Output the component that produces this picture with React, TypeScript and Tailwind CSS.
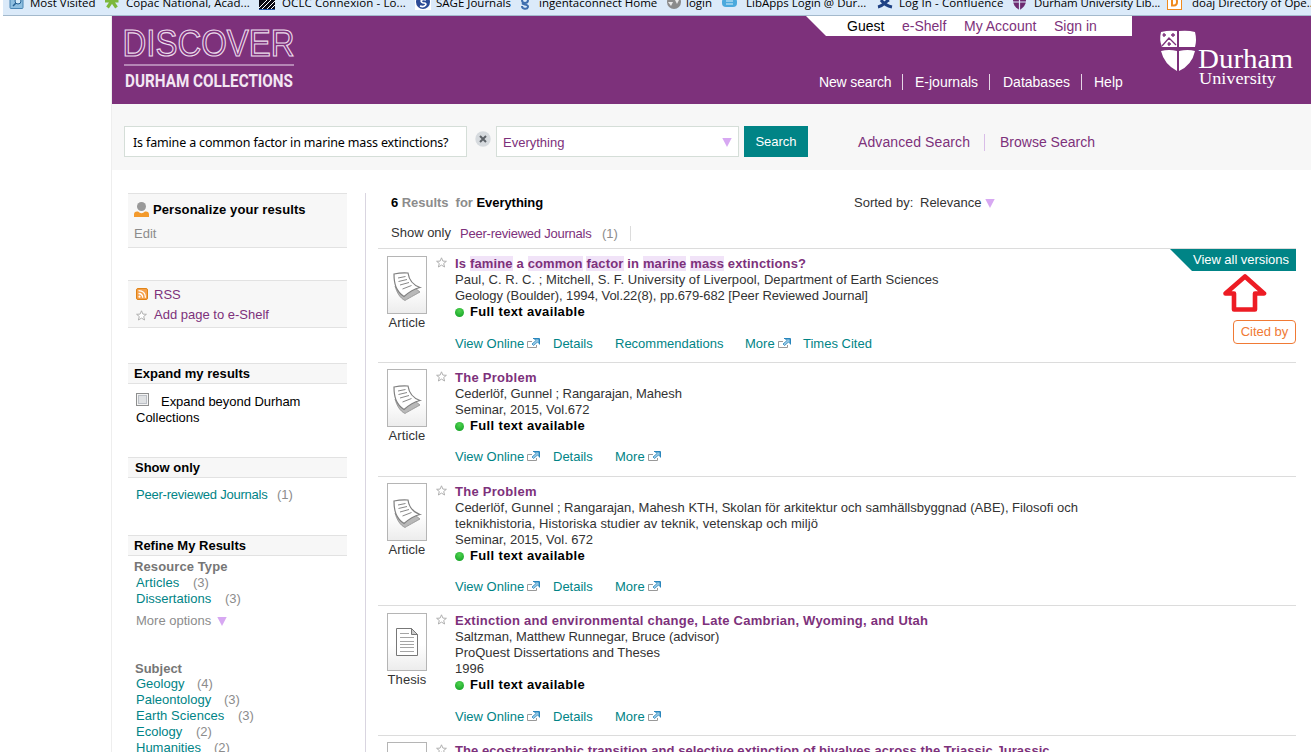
import React from "react";

const cx = (...parts: (string | undefined)[]) => parts.filter(Boolean).join(" ");

/* ---------- icons ---------- */

function Star() {
  return (
    <svg width="11" height="11" viewBox="0 0 11 11" className="block shrink-0">
      <path d="M5.5 .8 6.9 4.1 10.4 4.3 7.7 6.5 8.6 10 5.5 8.1 2.4 10 3.3 6.5 .6 4.3 4.1 4.1Z" fill="#fff" stroke="#b0b0b0" strokeWidth="1" />
    </svg>
  );
}

function External() {
  return (
    <svg width="13" height="11" viewBox="0 0 13 11" className="block shrink-0">
      <path d="M5 3.500H.5V9.500H9.500V7" fill="none" stroke="#999" />
      <path d="M6 .5H12.500V6.500" fill="none" stroke="#2a86bd" />
      <path d="M7.500 1H12V5.500L10.500 4 6.500 7.500 5 6 9 2.500Z" fill="#9ccbe6" stroke="#2a86bd" strokeWidth=".8" />
    </svg>
  );
}

function Triangle({ className }: { className?: string }) {
  return (
    <svg width="10" height="9" viewBox="0 0 10 9" className={cx("block shrink-0", className)}>
      <path d="M.3 0H9.700L5 9Z" fill="#d7a8f2" />
    </svg>
  );
}

function ArticleThumb() {
  return (
    <svg width="40" height="58" viewBox="0 0 40 58" className="block">
      <defs>
        <linearGradient id="thumb" x1="0" y1="0" x2="0" y2="1">
          <stop offset="0.550" stopColor="#fff" />
          <stop offset="1" stopColor="#ececec" />
        </linearGradient>
      </defs>
      <rect x=".5" y=".5" width="39" height="57" fill="url(#thumb)" stroke="#b5b5b5" />
      <path d="M8 30C10 37 13 42 18 44.500 22 42 26 40 33 36L28 32Z" fill="#b9b9b9" stroke="#8f8f8f" strokeWidth=".8" />
      <path d="M7 18C7 28 9 35 17 40.500 22 36 27 33 33 31.500 26 29 22 24 21 17Q14 16.500 7 18Z" fill="#fff" stroke="#808080" strokeWidth="1.200" />
      <path d="M11 22 18.500 20.500M11.500 25.500 20 23.500M13 29 22 26.500M15.500 33 24.500 29.500" stroke="#888" strokeWidth="1" />
    </svg>
  );
}

function ThesisThumb() {
  return (
    <svg width="40" height="58" viewBox="0 0 40 58" className="block">
      <rect x=".5" y=".5" width="39" height="57" fill="url(#thumb)" stroke="#b5b5b5" />
      <path d="M9.500 15.500H24.500L30.500 21.500V42.500H9.500Z" fill="#fff" stroke="#777" />
      <path d="M24.500 15.500V21.500H30.500Z" fill="#ccc" stroke="#777" />
      <path d="M13 20.500H22M13 24.500H27M13 28.500H27M13 31.500H27M13 34.500H27M13 38.500H27" stroke="#a5a5a5" />
    </svg>
  );
}

/* ---------- bookmarks bar ---------- */

const bookmarkIcons: React.ReactNode[] = [
  <g key="0"><rect x="1" y="-3" width="13" height="11.500" rx="1" fill="#8fbfe0" stroke="#4b86b4" /><path d="M4 6 7 3" stroke="#245f91" strokeWidth="1.500" /><circle cx="9" cy="1" r="3" fill="#d6ecfa" stroke="#245f91" /></g>,
  <path key="1" d="M8 1 3.500 7.500M8 1 12.500 7.500M1 1H14.500" stroke="#7cb83c" strokeWidth="3.200" />,
  <g key="2"><rect width="16" height="10" fill="#0a0a14" /><path d="M3 9 12 0M7 10 16 1M11 10 16 5M0 8 8 0" stroke="#fff" strokeWidth="1" /><path d="M0 9.500H16" stroke="#2456a8" /></g>,
  <g key="3"><rect width="16" height="10" fill="#fff" /><circle cx="8" cy="2" r="7" fill="#2c4b96" /><path d="M11 0C5-2 5 3 9 3S10 8 5 6" fill="none" stroke="#fff" strokeWidth="1.700" /></g>,
  <path key="4" d="M5 0C5 4 11 4 11 0M6 3C4 5 12 4 11 7S5 9 5 6" fill="none" stroke="#3f6fae" strokeWidth="2" />,
  <g key="5"><circle cx="8" cy="2" r="7" fill="#8b8b8b" /><path d="M2 2H7L5 6ZM9 0H13L11 4Z" fill="#e8e8e8" /></g>,
  <g key="6"><rect x="0" y="-2" width="15" height="9" rx="4" fill="#4aa9dd" /><path d="M4 1H11M4 4H11" stroke="#d9f0fb" /></g>,
  <path key="7" d="M1 7C6 6 8 2 12 0M4 0C7 4 10 6 15 7" stroke="#1e4184" strokeWidth="3" fill="none" />,
  <g key="8"><path d="M1 0H14C14 5 11 8 7.500 10 4 8 1 5 1 0Z" fill="#6c2a70" /><path d="M7.500 0V10M0 2H15" stroke="#dbeaf9" strokeWidth="1.200" /></g>,
  <g key="9"><rect x=".5" y="-5" width="14" height="14.500" fill="#fff" stroke="#f08a1d" /><path d="M5-2V5.500H7C11 5.500 11-2 7-2" fill="none" stroke="#f08a1d" strokeWidth="2" /></g>,
];

const bookmarks: [string, string, string][] = [
  ["Most Visited", "w-[95px]", "ml-[5px]"],
  ["Copac National, Acad...", "w-[155px]", "ml-[6px] tracking-[0.05px]"],
  ["OCLC Connexion - Lo...", "w-[156px]", "ml-[7px] tracking-[0.1px]"],
  ["SAGE Journals", "w-[102px]", "ml-[5px]"],
  ["ingentaconnect Home", "w-[149px]", "ml-[6px]"],
  ["login", "w-[56px]", "ml-[4px]"],
  ["LibApps Login @ Dur...", "w-[155px]", "ml-[8px]"],
  ["Log In - Confluence", "w-[135px]", "ml-[6px] tracking-[0.1px]"],
  ["Durham University Lib...", "w-[155px]", "ml-[6px] tracking-[-0.1px]"],
  ["doaj Directory of Ope...", "w-[160px]", "ml-[9px]"],
];

function BookmarksBar() {
  return (
    <div className="ml-[3px] flex h-[16px] overflow-hidden border-b border-[#a3b9cc] bg-[#dbeaf9] pl-[6px] font-['Open_Sans',sans-serif] text-[11.5px] text-black">
      {bookmarks.map(([label, width, gap], i) => (
        <div key={label} className={cx("flex shrink-0 whitespace-nowrap", width)}>
          <svg width="16" height="11" viewBox="0 0 16 11" className="shrink-0">{bookmarkIcons[i]}</svg>
          <span className={cx("-mt-[5px] leading-[16px]", gap)}>{label}</span>
        </div>
      ))}
    </div>
  );
}

/* ---------- header ---------- */

function Header() {
  return (
    <header className="flex h-[88px] bg-[#7d317b]">
      <svg width="190" height="88" viewBox="112 16 190 88" className="shrink-0">
        <text x="122.500" y="55.500" textLength="172" lengthAdjust="spacingAndGlyphs" fontFamily="Liberation Sans, sans-serif" fontSize="37" fill="#7d317b" stroke="#ecdcec" strokeWidth="1.200">DISCOVER</text>
        <path d="M124 65H294" stroke="#c9a3c8" strokeWidth="1.600" />
        <text x="125" y="87" textLength="168" lengthAdjust="spacingAndGlyphs" fontFamily="Roboto, sans-serif" fontWeight="700" fontSize="18.500" fill="#f3e6f3">DURHAM COLLECTIONS</text>
      </svg>
      <div className="ml-auto flex w-[326px] flex-col">
        <div className="flex h-[20px] bg-white pl-[41px] text-[14px] leading-[20px] text-[#7d317b] [clip-path:polygon(0_0,100%_0,100%_100%,20px_100%)]">
          <span className="w-[55px] text-black">Guest</span>
          <span className="w-[62px]">e-Shelf</span>
          <span className="w-[90px]">My Account</span>
          <span>Sign in</span>
        </div>
        <nav className="mt-[38px] flex h-[16px] whitespace-nowrap pl-[13px] text-[14px] leading-[16px] text-white">
          <span className="w-[83px] tracking-[-0.15px]">New search</span>
          <span className="w-[87px] border-l border-[#e5d5e5] pl-[12px]">E-journals</span>
          <span className="w-[92px] border-l border-[#e5d5e5] pl-[13px]">Databases</span>
          <span className="border-l border-[#e5d5e5] pl-[12px]">Help</span>
        </nav>
      </div>
      <svg width="179" height="88" viewBox="1132 16 179 88" className="shrink-0">
        <path d="M1161 32Q1169 30 1177 31V47H1162Q1159 40 1161 32ZM1179 31Q1188 30 1195 32 1197 40 1195 47H1179ZM1161 51Q1169 49 1177 51V71Q1164 64 1161 51ZM1179 51Q1188 49 1195 51 1192 65 1179 71Z" fill="#fff" />
        <path d="M1162 46 1169 38 1176 45M1164 33V37M1162.500 35H1166M1173 33V37M1171 35H1175M1169 42V46M1167.500 44H1171" fill="none" stroke="#7d317b" strokeWidth="1.300" />
        <text x="1198" y="68" textLength="95" lengthAdjust="spacingAndGlyphs" fontFamily="Liberation Serif, serif" fontSize="27" fill="#fff">Durham</text>
        <text x="1199" y="84" textLength="77" lengthAdjust="spacingAndGlyphs" fontFamily="Liberation Serif, serif" fontSize="17.500" fill="#fff">University</text>
      </svg>
    </header>
  );
}

function SearchBand() {
  return (
    <div className="flex h-[66px] bg-[#f7f7f7] pl-[12px] pt-[22px]">
      <div className="flex h-[31px] w-[343px] items-center whitespace-nowrap border border-[#d5ded8] bg-white pl-[8px] pt-[4px] font-['Noto_Sans',sans-serif] text-[12.5px] tracking-[-0.16px] text-black">
        Is famine a common factor in marine mass extinctions?
      </div>
      <svg width="16" height="16" viewBox="0 0 16 16" className="ml-[8px] mt-[5px] shrink-0">
        <circle cx="8" cy="8" r="7.700" fill="#d6dade" />
        <path d="M5 5 11 11M11 5 5 11" stroke="#5d6268" strokeWidth="2" />
      </svg>
      <div className="ml-[5px] flex h-[31px] w-[243px] items-center justify-between border border-[#d5ded8] bg-white pl-[6px] pr-[6px] pt-[2px] text-[13px] text-[#7d317b]">
        <span>Everything</span>
        <Triangle />
      </div>
      <button className="ml-[5px] h-[31px] w-[64px] bg-[#008486] text-[13px] text-white">Search</button>
      <div className="ml-[50px] flex h-[16px] whitespace-nowrap pt-[8px] text-[14px] text-[#7d317b]">
        <span className="h-[17px] w-[126px] leading-[16px] tracking-[0.1px]">Advanced Search</span>
        <span className="h-[17px] border-l border-[#d9bde8] pl-[15px] leading-[16px]">Browse Search</span>
      </div>
    </div>
  );
}

/* ---------- sidebar ---------- */

function Bar({ children, className }: { children: React.ReactNode; className?: string }) {
  return (
    <h2 className={cx("h-[21px] border-y border-[#e2e2e2] bg-[#f7f7f7] text-[13px] font-bold leading-[19px] text-black", className)}>
      {children}
    </h2>
  );
}

function Facet({ name, count, width }: { name: string; count: number; width: string }) {
  return (
    <div className="flex pl-[8px] text-[13px] leading-[16px] text-[#008486]">
      <span className={cx("shrink-0 whitespace-nowrap", width)}>{name}</span>
      <span className="text-[#8c8c8c]">({count})</span>
    </div>
  );
}

function Sidebar() {
  return (
    <aside className="mt-[23px] w-[219px] shrink-0 text-[13px] leading-[16px]">
      <section className="h-[55px] border-y border-[#e2e2e2] bg-[#f7f7f7] pl-[6px] pt-[8px]">
        <div className="flex items-center">
          <svg width="15" height="16" viewBox="0 0 15 16" className="shrink-0">
            <path d="M0 15V12.500Q0 9 4 9.500 7.500 13 11 9.500 15 9 15 12.500V15Z" fill="#f39a2c" />
            <circle cx="7.500" cy="4.500" r="4.500" fill="#999" />
          </svg>
          <b className="ml-[4px] tracking-[0.1px] text-black">Personalize your results</b>
        </div>
        <div className="mt-[8px] text-[#8c8c8c]">Edit</div>
      </section>
      <section className="mt-[32px] h-[48px] border-y border-[#e2e2e2] bg-[#f7f7f7] pl-[8px] pt-[6px] text-[#7d317b]">
        <div className="flex items-center">
          <svg width="12" height="12" viewBox="0 0 12 12" className="-mt-[2px] shrink-0">
            <rect x=".5" y=".5" width="11" height="11" rx="1.500" fill="#f5a04a" stroke="#e08417" />
            <circle cx="3.500" cy="8.700" r="1.100" fill="#fff" />
            <path d="M2.500 5.500Q6.500 5.500 6.700 9.700M2.500 2.700Q9.300 2.700 9.500 9.700" fill="none" stroke="#fff" strokeWidth="1.300" />
          </svg>
          <span className="ml-[6px]">RSS</span>
        </div>
        <div className="mt-[4px] flex items-center">
          <Star />
          <span className="ml-[7px]">Add page to e-Shelf</span>
        </div>
      </section>
      <Bar className="mt-[35px] pl-[6px] tracking-[0.03px]">Expand my results</Bar>
      <div className="mt-[9px] pl-[8px] text-black">
        <div className="flex">
          <span className="h-[13px] w-[13px] border border-[#8e8f8f] bg-[#dfe1e3] shadow-[inset_0_0_0_1px_#f4f4f4,inset_0_0_0_2px_#bcc0c6]" />
          <span className="ml-[12px] mt-px tracking-[-0.04px]">Expand beyond Durham</span>
        </div>
        <div>Collections</div>
      </div>
      <Bar className="mt-[31px] pl-[7px]">Show only</Bar>
      <div className="mt-[9px]">
        <Facet name="Peer-reviewed Journals" count={1} width="w-[141px] tracking-[-0.23px]" />
      </div>
      <Bar className="mt-[32px] pl-[6px]">Refine My Results</Bar>
      <div className="mt-[3px] pl-[6px] font-bold tracking-[0.1px] text-[#767676]">Resource Type</div>
      <Facet name="Articles" count={3} width="w-[57px] tracking-[0.1px]" />
      <Facet name="Dissertations" count={3} width="w-[89px]" />
      <div className="mt-[6px] flex items-center pl-[8px] text-[#8c8c8c]">
        <span className="w-[81px]">More options</span>
        <Triangle />
      </div>
      <div className="mt-[32px] pl-[7px] font-bold text-[#767676]">Subject</div>
      <div className="-mt-px">
        <Facet name="Geology" count={4} width="w-[61px]" />
        <Facet name="Paleontology" count={3} width="w-[88px]" />
        <Facet name="Earth Sciences" count={3} width="w-[102px] tracking-[0.07px]" />
        <Facet name="Ecology" count={2} width="w-[60px]" />
        <Facet name="Humanities" count={2} width="w-[78px]" />
      </div>
    </aside>
  );
}

/* ---------- results ---------- */

type Action = { label: string; width: string; external?: boolean };
type Line = { text: string; tracking?: string };

const view: Action = { label: "View Online", width: "w-[98px]", external: true };
const details: Action = { label: "Details", width: "w-[62px]" };
const more: Action = { label: "More", width: "w-[58px]", external: true };

type ResultProps = {
  height: string;
  thumbTop: string;
  kind: "Article" | "Thesis";
  title: React.ReactNode;
  titleTracking: string;
  lines: Line[];
  actions: Action[];
  actionsTop: string;
  children?: React.ReactNode;
};

function Result({ height, thumbTop, kind, title, titleTracking, lines, actions, actionsTop, children }: ResultProps) {
  return (
    <article className={cx("flex shrink-0 border-t border-[#dcdcdc] text-[13px] leading-[16px] text-[#333]", height)}>
      <div className={cx("ml-[9px] w-[40px] shrink-0 text-center", thumbTop)}>
        {kind === "Article" ? <ArticleThumb /> : <ThesisThumb />}
        <div className="mt-px tracking-[0.1px]">{kind}</div>
      </div>
      <div className="ml-[9px] mt-[8px] w-[19px] shrink-0"><Star /></div>
      <div className="mt-[7px] whitespace-nowrap">
        <h3 className={cx("font-bold text-[#7d317b]", titleTracking)}>{title}</h3>
        {lines.map((line) => <div key={line.text} className={line.tracking}>{line.text}</div>)}
        <div className="flex items-center font-bold tracking-[0.35px] text-black">
          <span className="mr-[6px] h-[9px] w-[9px] rounded-full bg-[radial-gradient(circle_at_50%_30%,#4fd34f,#0f9c22)]" />
          Full text available
        </div>
        <div className={cx("flex text-[#008486]", actionsTop)}>
          {actions.map((a) => (
            <span key={a.label} className={cx("flex shrink-0 items-start", a.width)}>
              {a.label}
              {a.external && <span className="ml-[3px] mt-[2px]"><External /></span>}
            </span>
          ))}
        </div>
      </div>
      {children}
    </article>
  );
}

const Hit = ({ children }: { children: string }) => <span className="bg-[#f1e3f8]">{children}</span>;

function Results() {
  return (
    <main className="ml-[12px] mt-[24px] flex w-[918px] shrink-0 flex-col text-[13px] leading-[16px]">
      <div className="flex h-[18px] shrink-0 items-center pl-[13px]">
        <b className="w-[463px] tracking-[-0.04px] text-[#8c8c8c]">
          <span className="text-black">6</span> Results&nbsp; for <span className="text-black">Everything</span>
        </b>
        <span className="w-[66px] whitespace-nowrap text-[#333]">Sorted by:</span>
        <span className="w-[65px] text-[#333]">Relevance</span>
        <Triangle />
      </div>
      <div className="mt-[14px] flex h-[16px] shrink-0 pl-[13px] text-[#333]">
        <span className="-mt-px w-[69px]">Show only</span>
        <span className="w-[142px] tracking-[-0.23px] text-[#7d317b]">Peer-reviewed Journals</span>
        <span className="w-[28px] text-[#8c8c8c]">(1)</span>
        <span className="h-[15px] border-l border-[#dcdcdc]" />
      </div>
      <div className="h-[6px] shrink-0" />
      <Result
        height="h-[114px]"
        thumbTop="mt-[7px]"
        kind="Article"
        title={<>Is <Hit>famine</Hit> a <Hit>common</Hit> <Hit>factor</Hit> in <Hit>marine</Hit> <Hit>mass</Hit> extinctions?</>}
        titleTracking="tracking-[0.15px]"
        lines={[
          { text: "Paul, C. R. C. ; Mitchell, S. F. University of Liverpool, Department of Earth Sciences", tracking: "tracking-[0.045px]" },
          { text: "Geology (Boulder), 1994, Vol.22(8), pp.679-682 [Peer Reviewed Journal]", tracking: "tracking-[-0.09px]" },
        ]}
        actionsTop="mt-[16px]"
        actions={[
          view,
          details,
          { label: "Recommendations", width: "w-[130px]" },
          more,
          { label: "Times Cited", width: "w-[80px]" },
        ]}
      >
        <div className="ml-auto flex flex-col items-end">
          <div className="h-[22px] w-[126px] whitespace-nowrap bg-[#008486] pl-[23px] leading-[21px] tracking-[-0.04px] text-white [clip-path:polygon(0_0,100%_0,100%_100%,22px_100%)]">View all versions</div>
          <svg width="45" height="40" viewBox="0 0 45 40" className="mr-[29px] mt-[2px]">
            <path d="M23 3.500 42 20.500H33V36.500H12V20.500H3.500Z" fill="#fff" stroke="#ed1c24" strokeWidth="4.600" strokeLinejoin="round" />
          </svg>
          <div className="mt-[7px] h-[24px] w-[63px] rounded-[4px] border border-[#f07a35] text-center leading-[21px] text-[#f07a35]">Cited by</div>
        </div>
      </Result>
      <Result
        height="h-[114px]"
        thumbTop="mt-[6px]"
        kind="Article"
        title="The Problem"
        titleTracking="tracking-[0.27px]"
        lines={[
          { text: "Cederlöf, Gunnel ; Rangarajan, Mahesh", tracking: "tracking-[-0.08px]" },
          { text: "Seminar, 2015, Vol.672" },
        ]}
        actionsTop="mt-[15px]"
        actions={[view, details, more]}
      />
      <Result
        height="h-[129px]"
        thumbTop="mt-[6px]"
        kind="Article"
        title="The Problem"
        titleTracking="tracking-[0.27px]"
        lines={[
          { text: "Cederlöf, Gunnel ; Rangarajan, Mahesh KTH, Skolan för arkitektur och samhällsbyggnad (ABE), Filosofi och" },
          { text: "teknikhistoria, Historiska studier av teknik, vetenskap och miljö", tracking: "tracking-[0.06px]" },
          { text: "Seminar, 2015, Vol. 672" },
        ]}
        actionsTop="mt-[15px]"
        actions={[view, details, more]}
      />
      <Result
        height="h-[130px]"
        thumbTop="mt-[7px]"
        kind="Thesis"
        title="Extinction and environmental change, Late Cambrian, Wyoming, and Utah"
        titleTracking="tracking-[0.235px]"
        lines={[
          { text: "Saltzman, Matthew Runnegar, Bruce (advisor)", tracking: "tracking-[-0.04px]" },
          { text: "ProQuest Dissertations and Theses" },
          { text: "1996" },
        ]}
        actionsTop="mt-[16px]"
        actions={[view, details, more]}
      />
      <Result
        height="h-[130px]"
        thumbTop="mt-[6px]"
        kind="Article"
        title="The ecostratigraphic transition and selective extinction of bivalves across the Triassic Jurassic"
        titleTracking="tracking-[0.06px]"
        lines={[]}
        actionsTop="mt-[16px]"
        actions={[view, details, more]}
      />
    </main>
  );
}

export default function App() {
  return (
    <div className="h-[755px] w-[1311px] overflow-hidden bg-white pb-[3px] font-['Liberation_Sans',Arial,sans-serif]">
      <div className="h-[752px] overflow-hidden">
        <BookmarksBar />
        <div className="ml-[111px] border-l border-[#eeeeee]">
          <Header />
          <SearchBand />
          <div className="flex h-[582px] overflow-hidden pl-[16px]">
            <Sidebar />
            <div className="ml-[18px] mt-[23px] w-px shrink-0 bg-[#d9d5e0]" />
            <Results />
          </div>
        </div>
      </div>
    </div>
  );
}
